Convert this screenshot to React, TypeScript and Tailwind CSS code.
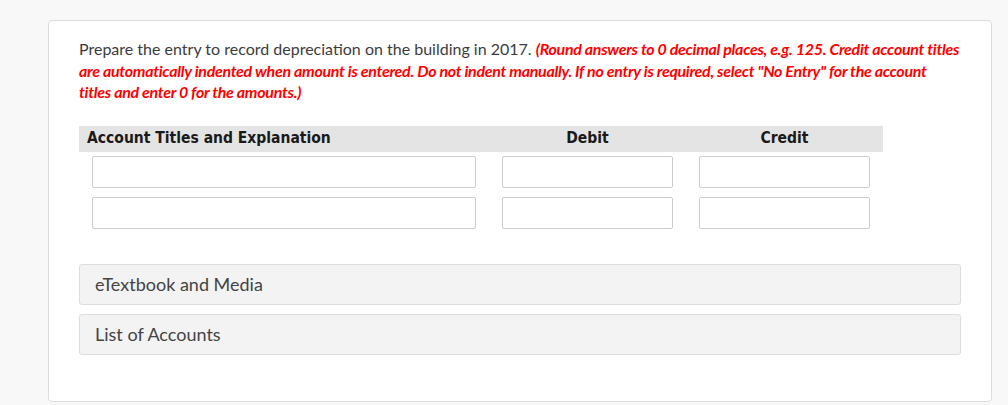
import React from 'react';

export default function App() {
  const rows = [0, 1];

  return (
    <div className="min-h-[405px] w-full bg-[#f8f8f8] pt-5 pl-12 pr-4" style={{ fontFamily: 'Lato, "Open Sans", sans-serif' }}>
      <div className="w-[944px] h-[382px] bg-white border border-[#dcdcdc] rounded-[4px] pl-[30px] pr-[30px] pt-[17px]">
        {/* Instructions */}
        <p className="text-[16px] leading-[21.5px] text-[#3c3c3c]">
          Prepare the entry to record depreciation on the building in 2017.{' '}
          <span className="font-bold italic tracking-[-0.3px] text-[#ff0000]">
            (Round answers to 0 decimal places, e.g. 125. Credit account titles are automatically indented when amount is entered. Do not indent manually. If no entry is required, select "No Entry" for the account titles and enter 0 for the amounts.)
          </span>
        </p>

        {/* Journal entry table */}
        <div className="mt-[23px] w-[804px]">
          <div
            className="grid grid-cols-[410px_197px_197px] h-[26px] items-center bg-[#e4e4e4] text-[15.5px] font-bold text-[#1a1a1a]"
            style={{ fontFamily: '"DejaVu Sans Condensed", "DejaVu Sans", sans-serif' }}
          >
            <div className="pl-2">Account Titles and Explanation</div>
            <div className="text-center">Debit</div>
            <div className="text-center">Credit</div>
          </div>
          <div className="flex flex-col gap-[9px] pt-1">
            {rows.map((r) => (
              <div key={r} className="grid grid-cols-[410px_197px_197px]">
                <div className="px-[13px]">
                  <input className="w-full h-8 border border-[#cccccc] rounded-[2px] bg-white outline-none" />
                </div>
                <div className="px-[13px]">
                  <input className="w-full h-8 border border-[#cccccc] rounded-[2px] bg-white outline-none" />
                </div>
                <div className="px-[13px]">
                  <input className="w-full h-8 border border-[#cccccc] rounded-[2px] bg-white outline-none" />
                </div>
              </div>
            ))}
          </div>
        </div>

        {/* Expandable sections */}
        <div className="mt-[35px] flex flex-col gap-[9px]">
          {['eTextbook and Media', 'List of Accounts'].map((label) => (
            <div
              key={label}
              className="h-[41px] flex items-center px-[15px] bg-[#f3f3f3] border border-[#dddddd] rounded-[3px] text-[18px] text-[#444444]"
            >
              {label}
            </div>
          ))}
        </div>
      </div>
    </div>
  );
}
